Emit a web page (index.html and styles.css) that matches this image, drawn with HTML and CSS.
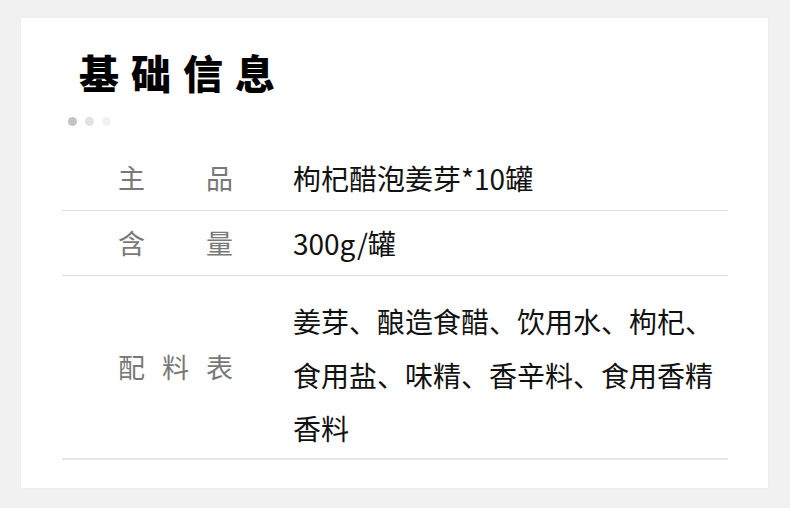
FILE: index.html
```html
<!DOCTYPE html>
<html lang="zh">
<head>
<meta charset="utf-8">
<link rel="stylesheet" href="styles.css">
</head>
<body>
<div class="card">
  <h1 class="title">基础信息</h1>
  <div class="dots"><span class="dot d1"></span><span class="dot d2"></span><span class="dot d3"></span></div>
  <div class="table">
    <div class="row">
      <div class="label">主品</div>
      <div class="value">枸杞醋泡姜芽*10罐</div>
    </div>
    <div class="row">
      <div class="label">含量</div>
      <div class="value">300g/罐</div>
    </div>
    <div class="row multi">
      <div class="label">配料表</div>
      <div class="value">姜芽、酿造食醋、饮用水、枸杞、食用盐、味精、香辛料、食用香精香料</div>
    </div>
  </div>
</div>
</body>
</html>
```

FILE: styles.css
```css
html, body {
  margin: 0;
  padding: 0;
}
body {
  background: #f1f1f1;
  padding: 18px 22px 20px 21px;
  font-family: "Noto Sans CJK SC", "Noto Sans", sans-serif;
}
.card {
  width: 747px;
  height: 470px;
  background: #ffffff;
  box-sizing: border-box;
  padding-top: 32px;
  box-shadow: 0 0 2px rgba(0,0,0,0.04);
}
.title {
  margin: 0 0 0 58px;
  font-size: 40px;
  line-height: 44px;
  font-weight: 900;
  letter-spacing: 12px;
  color: #000;
}
.dots {
  display: flex;
  gap: 8px;
  margin: 23px 0 0 47px;
  height: 9px;
}
.dot {
  width: 9px;
  height: 9px;
  border-radius: 50%;
}
.d1 { background: #c4c4c4; }
.d2 { background: #e2e2e2; }
.d3 { background: #f2f2f2; }
.table {
  margin: 20px 0 0 41px;
  width: 666px;
}
.row {
  display: grid;
  grid-template-columns: 231px 435px;
  align-items: center;
  height: 64px;
  border-bottom: 1px solid #dddddd;
}
.row.multi {
  height: auto;
  border-bottom: 2px solid #e6e6e6;
}
.label {
  margin-left: 56px;
  width: 115px;
  font-size: 27px;
  color: #787878;
  text-align: justify;
  text-align-last: justify;
  line-height: 40px;
}
.value {
  font-size: 28px;
  color: #111;
  line-height: 40px;
}
.multi .value {
  line-height: 53.5px;
  padding: 19px 0 2px;
}
```
